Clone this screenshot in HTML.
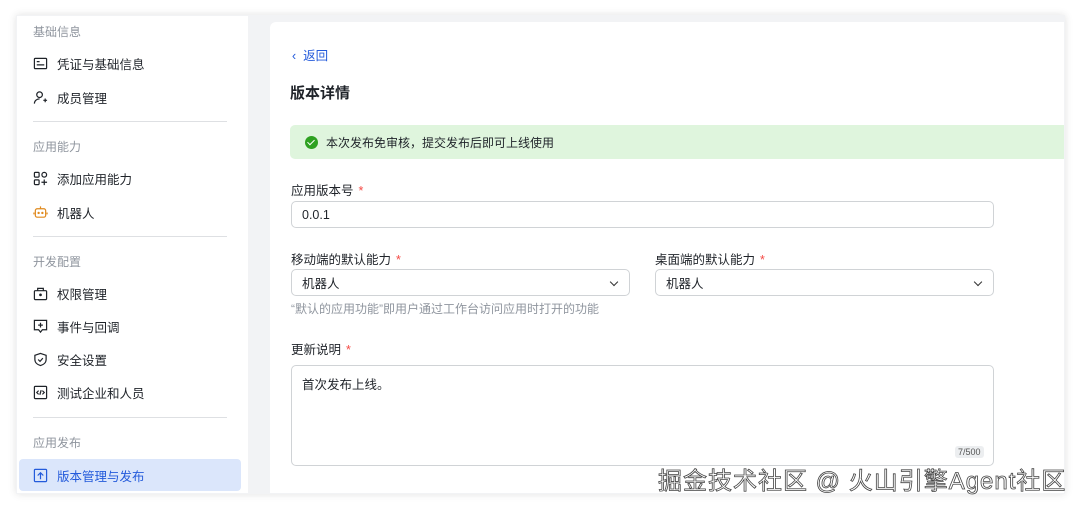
<!DOCTYPE html>
<html><head><meta charset="utf-8"><style>
*{box-sizing:border-box;margin:0;padding:0}
body{width:1080px;height:510px;background:#fff;position:relative;overflow:hidden;font-family:"Liberation Sans","Noto Sans CJK SC",sans-serif;color:#1f2329}
.frame{position:absolute;left:16px;top:15px;width:1049px;height:479px;background:#f2f3f5;box-shadow:0 0 8px rgba(0,0,0,.12)}
.side{position:absolute;left:17px;top:16px;width:231px;height:477px;background:#fff}
.grp{position:absolute;left:16px;font-size:12px;color:#8f959e}
.it{position:absolute;left:16px;font-size:12.5px;color:#1f2329;display:flex;align-items:center;gap:9px;height:20px}
.it svg{width:15px;height:15px;fill:none;stroke:#1f2329;stroke-width:1.3}
.div{position:absolute;left:16px;width:194px;height:1px;background:#dee0e3}
.act{position:absolute;left:2px;top:443px;width:222px;height:32px;background:#dbe6fb;border-radius:4px}
.card{position:absolute;left:270px;top:22px;width:794px;height:471px;background:#fff;border-radius:6px 0 0 0}
.abs{position:absolute}
.lbl{position:absolute;font-size:12.5px;color:#1f2329}
.lbl b{color:#f54a45;font-weight:normal;margin-left:5px}
.inp{position:absolute;border:1px solid #d0d3d6;border-radius:5px;background:#fff;font-size:12.5px;padding-left:10px;display:flex;align-items:center}
.chev{position:absolute;right:12px;top:9px;width:6px;height:6px;border-right:1.2px solid #333;border-bottom:1.2px solid #333;transform:rotate(45deg)}
.wm{position:absolute;left:658px;top:461px;font-size:24px;color:#fff;-webkit-text-stroke:0.8px #444;font-family:"Liberation Sans","Noto Sans CJK SC",sans-serif;letter-spacing:1px;white-space:nowrap}
</style></head><body>
<div class="frame"></div>
<div class="side">
  <div class="grp" style="top:7px">基础信息</div>
  <div class="it" style="top:37px"><svg viewBox="0 0 16 16"><rect x="1.5" y="2.5" width="13" height="11" rx="1"/><path d="M4 6h3M4 9.5h8"/></svg>凭证与基础信息</div>
  <div class="it" style="top:71px"><svg viewBox="0 0 16 16"><circle cx="7" cy="5" r="3"/><path d="M1.5 14.5c0-3 2.5-5 5.5-5M11 11h4M13 9v4"/></svg>成员管理</div>
  <div class="div" style="top:105px"></div>
  <div class="grp" style="top:122px">应用能力</div>
  <div class="it" style="top:152px"><svg viewBox="0 0 16 16"><rect x="1.5" y="1.5" width="5" height="5" rx="1"/><rect x="9.5" y="1.5" width="5" height="5" rx="2.5"/><rect x="1.5" y="9.5" width="5" height="5" rx="1"/><path d="M12 9v6M9 12h6"/></svg>添加应用能力</div>
  <div class="it" style="top:186px"><svg viewBox="0 0 16 16" style="stroke:#e08a1e"><rect x="2.5" y="4" width="11" height="9" rx="2"/><path d="M8 1.5V4M1 8v2M15 8v2"/><circle cx="6" cy="8.5" r=".6" fill="#e08a1e"/><circle cx="10" cy="8.5" r=".6" fill="#e08a1e"/></svg>机器人</div>
  <div class="div" style="top:220px"></div>
  <div class="grp" style="top:237px">开发配置</div>
  <div class="it" style="top:267px"><svg viewBox="0 0 16 16"><rect x="1.5" y="5" width="13" height="9.5" rx="1"/><path d="M5 5V2.5h6V5"/><circle cx="8" cy="9.5" r=".8" fill="#1f2329"/></svg>权限管理</div>
  <div class="it" style="top:300px"><svg viewBox="0 0 16 16"><path d="M1.5 1.5h13v10H10l-2 2.5-2-2.5H1.5z"/><path d="M8 4v5M5.5 6.5h5"/></svg>事件与回调</div>
  <div class="it" style="top:333px"><svg viewBox="0 0 16 16"><path d="M8 1.5l6 2v4.5c0 3.5-3 5.7-6 6.5-3-.8-6-3-6-6.5V3.5z"/><path d="M5.5 8l2 2 3-3.5"/></svg>安全设置</div>
  <div class="it" style="top:366px"><svg viewBox="0 0 16 16"><rect x="1.5" y="1.5" width="13" height="13" rx="1"/><path d="M6 6L4 8l2 2M10 6l2 2-2 2M8.7 5.5l-1.4 5"/></svg>测试企业和人员</div>
  <div class="div" style="top:401px"></div>
  <div class="grp" style="top:418px">应用发布</div>
  <div class="act"></div>
  <div class="it" style="top:449px;color:#245bdb"><svg viewBox="0 0 16 16" style="stroke:#245bdb"><rect x="1.5" y="1.5" width="13" height="13" rx="1"/><path d="M8 12V5M5 8l3-3 3 3"/></svg>版本管理与发布</div>
</div>
<div class="card">
  <div class="abs" style="left:22px;top:23px;font-size:12.5px;color:#245bdb">‹&nbsp; 返回</div>
  <div class="abs" style="left:20px;top:60px;font-size:15px;font-weight:bold;color:#1f2329">版本详情</div>
  <div class="abs" style="left:20px;top:103px;width:774px;height:34px;background:#dff5dd;border-radius:5px 0 0 5px"></div>
  <div class="abs" style="left:35px;top:114px;width:13px;height:13px;border-radius:50%;background:#2ea121"></div>
  <div class="abs" style="left:39px;top:116px;width:4px;height:7px;border-right:1.5px solid #fff;border-bottom:1.5px solid #fff;transform:rotate(45deg)"></div>
  <div class="abs" style="left:56px;top:112px;font-size:12px;color:#1f2329">本次发布免审核，提交发布后即可上线使用</div>
  <div class="lbl" style="left:21px;top:158px">应用版本号<b>*</b></div>
  <div class="inp" style="left:21px;top:179px;width:703px;height:27px">0.0.1</div>
  <div class="lbl" style="left:21px;top:227px">移动端的默认能力<b>*</b></div>
  <div class="inp" style="left:21px;top:247px;width:339px;height:27px">机器人<span class="chev"></span></div>
  <div class="lbl" style="left:385px;top:227px">桌面端的默认能力<b>*</b></div>
  <div class="inp" style="left:385px;top:247px;width:339px;height:27px">机器人<span class="chev"></span></div>
  <div class="abs" style="left:21px;top:278px;font-size:12px;color:#8f959e">“默认的应用功能”即用户通过工作台访问应用时打开的功能</div>
  <div class="lbl" style="left:21px;top:317px">更新说明<b>*</b></div>
  <div class="inp" style="left:21px;top:343px;width:703px;height:101px;align-items:flex-start;padding-top:8px">首次发布上线。</div>
  <div class="abs" style="left:685px;top:424px;font-size:9px;color:#555;background:#eceef0;padding:1px 3px;border-radius:3px">7/500</div>
</div>
<div class="wm">掘金技术社区 @ 火山引擎Agent社区</div>
</body></html>
